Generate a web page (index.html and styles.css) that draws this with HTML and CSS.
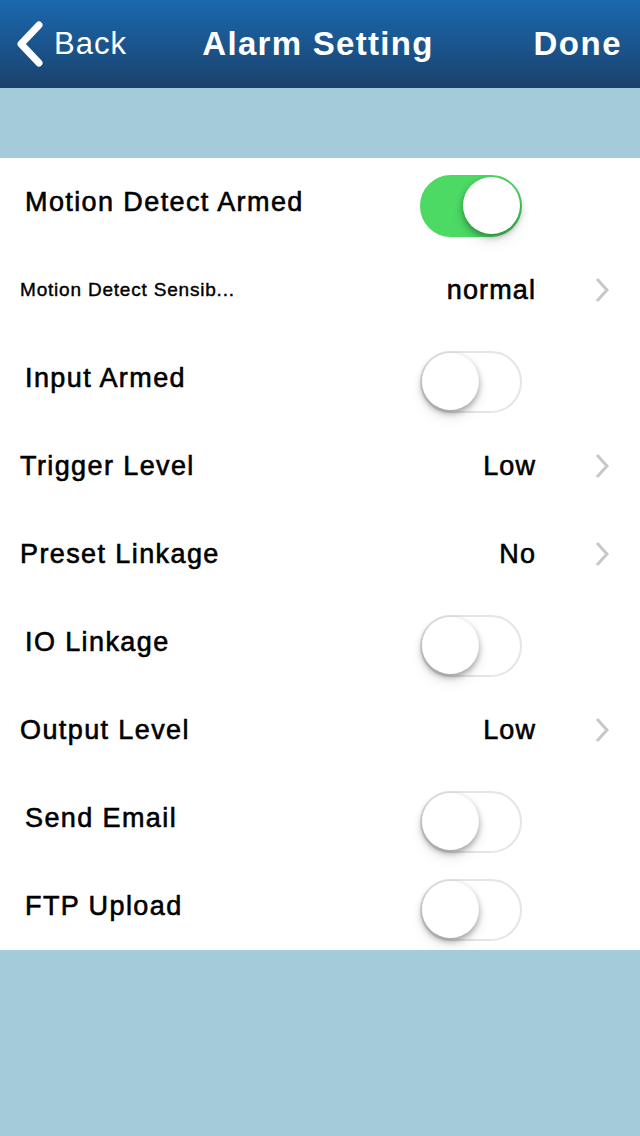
FILE: index.html
```html
<!DOCTYPE html>
<html lang="en">

<head>
    <meta charset="UTF-8">
    <title>Alarm Setting</title>
    <link rel="stylesheet" href="styles.css">
</head>

<body>

    <div class="navbar">
        <div class="nav-back">
            <svg class="back-icon" width="30" height="46" viewBox="0 0 30 46">
                <path d="M25 4 L7 23 L25 42" fill="none" stroke="#fff" stroke-width="7" stroke-linecap="round" stroke-linejoin="round" />
            </svg>
            <span>Back</span>
        </div>
        <div class="nav-title">Alarm Setting</div>
        <div class="nav-done">Done</div>
    </div>

    <div class="band"></div>

    <div class="list">
        <div class="row switch-row">
            <span class="label">Motion Detect Armed</span>
            <span class="switch on"><span class="knob"></span></span>
        </div>
        <div class="row">
            <span class="label small">Motion Detect Sensib...</span>
            <span class="value">normal</span>
            <svg class="chevron" width="16" height="26" viewBox="0 0 16 26">
                <path d="M3 2 L13 13 L3 24" fill="none" stroke="#c7c7cc" stroke-width="3" />
            </svg>
        </div>
        <div class="row switch-row">
            <span class="label">Input Armed</span>
            <span class="switch"><span class="knob"></span></span>
        </div>
        <div class="row">
            <span class="label">Trigger Level</span>
            <span class="value">Low</span>
            <svg class="chevron" width="16" height="26" viewBox="0 0 16 26">
                <path d="M3 2 L13 13 L3 24" fill="none" stroke="#c7c7cc" stroke-width="3" />
            </svg>
        </div>
        <div class="row">
            <span class="label">Preset Linkage</span>
            <span class="value">No</span>
            <svg class="chevron" width="16" height="26" viewBox="0 0 16 26">
                <path d="M3 2 L13 13 L3 24" fill="none" stroke="#c7c7cc" stroke-width="3" />
            </svg>
        </div>
        <div class="row switch-row">
            <span class="label">IO Linkage</span>
            <span class="switch"><span class="knob"></span></span>
        </div>
        <div class="row">
            <span class="label">Output Level</span>
            <span class="value">Low</span>
            <svg class="chevron" width="16" height="26" viewBox="0 0 16 26">
                <path d="M3 2 L13 13 L3 24" fill="none" stroke="#c7c7cc" stroke-width="3" />
            </svg>
        </div>
        <div class="row switch-row">
            <span class="label">Send Email</span>
            <span class="switch"><span class="knob"></span></span>
        </div>
        <div class="row switch-row">
            <span class="label">FTP Upload</span>
            <span class="switch"><span class="knob"></span></span>
        </div>
    </div>

</body>

</html>
```

FILE: styles.css
```css
body {
    margin: 0;
    background: #a3cbd9;
    font-family: "Liberation Sans", Arial, sans-serif;
    color: #000;
}

.navbar {
    height: 88px;
    background: linear-gradient(#1b68ae, #1a426d);
    display: flex;
    align-items: center;
    justify-content: space-between;
    padding: 0 18px 0 14px;
    color: #fff;
}

.nav-back {
    display: flex;
    align-items: center;
    gap: 10px;
    font-size: 31px;
    letter-spacing: 1px;
    width: 160px;
}

.nav-title {
    font-size: 33px;
    font-weight: bold;
    letter-spacing: 1.3px;
}

.nav-done {
    font-size: 33px;
    font-weight: bold;
    letter-spacing: 1.5px;
    width: 160px;
    text-align: right;
}

.band {
    height: 70px;
}

.list {
    background: #fff;
}

.row {
    height: 88px;
    display: flex;
    align-items: center;
    padding-left: 20px;
}

.switch-row {
    padding-left: 25px;
}

.label {
    font-size: 27px;
    letter-spacing: 1.4px;
    -webkit-text-stroke: 0.6px #000;
    flex: 1;
}

.label.small {
    font-size: 19px;
    letter-spacing: 0.8px;
    -webkit-text-stroke: 0.4px #000;
}

.value {
    font-size: 27px;
    letter-spacing: 1.1px;
    -webkit-text-stroke: 0.6px #000;
    margin-right: 58px;
}

.chevron {
    margin-right: 30px;
}

.switch {
    position: relative;
    width: 98px;
    height: 58px;
    border: 2px solid #e5e5e5;
    border-radius: 31px;
    margin-right: 118px;
    margin-top: 7px;
    background: #fff;
}

.switch.on {
    background: #4cd964;
    border-color: #4cd964;
}

.knob {
    position: absolute;
    top: 0;
    left: 0;
    width: 57px;
    height: 57px;
    border-radius: 50%;
    background: #fff;
    box-shadow: 0 3px 6px rgba(0, 0, 0, 0.35), 0 8px 14px rgba(0, 0, 0, 0.08);
}

.switch.on .knob {
    left: auto;
    right: 0;
}
```
